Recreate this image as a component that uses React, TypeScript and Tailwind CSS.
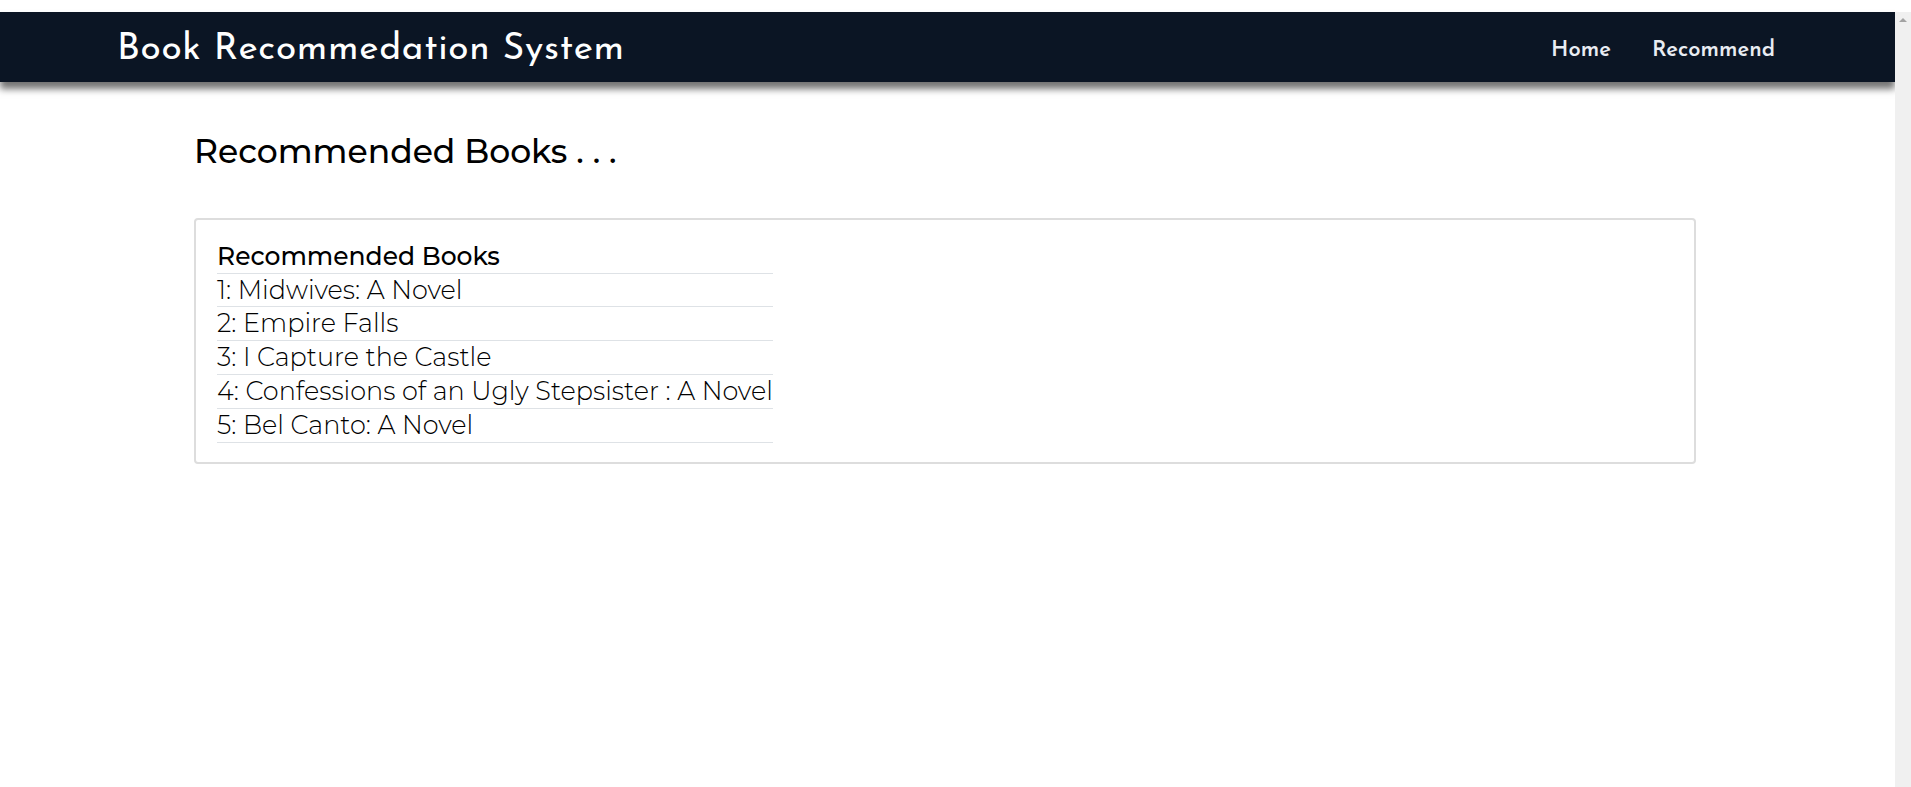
const books = [
  "1: Midwives: A Novel",
  "2: Empire Falls",
  "3: I Capture the Castle",
  "4: Confessions of an Ugly Stepsister : A Novel",
  "5: Bel Canto: A Novel",
];

const App = () => {
  return (
    <div className="min-h-[787px] bg-white pt-[12px] flex">
      <div className="flex-1 flex flex-col">
        {/* Navbar */}
        <nav className="h-[70px] bg-[#0b1524] flex items-center justify-between pl-[117px] pr-[120px] shadow-[0_7px_7px_rgba(0,0,0,0.55)]">
          <a
            href="#"
            className="text-white text-[37px] tracking-[0.7px] pt-[5px]"
            style={{ fontFamily: '"Josefin Sans", Lato, sans-serif' }}
          >
            Book Recommedation System
          </a>
          <div
            className="flex gap-[41px] text-[#e9ecf2] text-[22px] font-semibold pt-[6px]"
            style={{ fontFamily: '"Josefin Sans", Lato, sans-serif' }}
          >
            <a href="#">Home</a>
            <a href="#">Recommend</a>
          </div>
        </nav>

        {/* Content */}
        <main
          className="w-[1502px] ml-[194px] pt-[50px] text-black"
          style={{ fontFamily: 'Montserrat, "Open Sans", sans-serif' }}
        >
          <h2 className="text-[33px] leading-[1.2] font-medium">Recommended Books . . .</h2>
          <div className="mt-[46px] border-2 border-[#dddddd] rounded-[4px] px-[21px] pt-[20px] pb-[19px]">
            <table className="border-collapse">
              <thead>
                <tr className="border-b border-[#dee2e6]">
                  <th className="text-left text-[25px] font-medium leading-[33px]">Recommended Books</th>
                </tr>
              </thead>
              <tbody>
                {books.map((b) => (
                  <tr key={b} className="border-b border-[#dee2e6]">
                    <td className="text-[25.5px] font-light leading-[32.8px] whitespace-nowrap">{b}</td>
                  </tr>
                ))}
              </tbody>
            </table>
          </div>
        </main>
      </div>

      {/* Scrollbar */}
      <div className="w-[16px] bg-[#f0f0f0] flex justify-center pt-[6px]">
        <div className="w-0 h-0 border-l-[4px] border-r-[4px] border-b-[4px] border-l-transparent border-r-transparent border-b-[#a3a3a3]" />
      </div>
    </div>
  );
};

export default App;
